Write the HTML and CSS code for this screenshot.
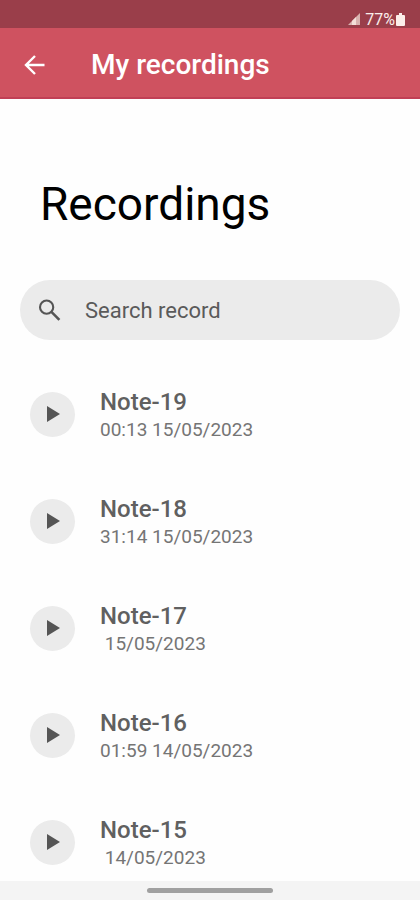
FILE: index.html
```html
<!DOCTYPE html>
<html lang="en">
<head>
    <meta charset="UTF-8">
    <meta name="viewport" content="width=device-width, initial-scale=1.0">
    <title>My recordings</title>
    <link rel="stylesheet" href="styles.css">
</head>
<body>
    <div class="status-bar">
        <svg class="signal" viewBox="0 0 12 12" aria-hidden="true">
            <path d="M0 12L12 0V12Z" fill="#d9b3b0"/>
            <path d="M4 12V8L8 4V12Z" fill="#f3dfd9"/>
        </svg>
        <span>77%</span>
        <svg class="battery" viewBox="0 0 9 13" aria-hidden="true">
            <path d="M3 0H6V2H8Q9 2 9 3V12Q9 13 8 13H1Q0 13 0 12V3Q0 2 1 2H3Z" fill="#fbeeea"/>
        </svg>
    </div>

    <header class="app-bar">
        <button type="button" class="back-btn" aria-label="Back">
            <svg viewBox="0 0 20 20" aria-hidden="true">
                <path d="M10.5 1L1.5 10L10.5 19M1.5 10H20" fill="none" stroke="#fff" stroke-width="2.4"/>
            </svg>
        </button>
        <h1>My recordings</h1>
    </header>

    <main>
        <h2>Recordings</h2>
        <label class="search">
            <svg viewBox="0 0 24 24" aria-hidden="true">
                <circle cx="9" cy="8.5" r="6.9" fill="none" stroke="#555" stroke-width="2.2"/>
                <path d="M14 13.5L22.3 21.8" stroke="#555" stroke-width="2.7"/>
            </svg>
            <input type="search" placeholder="Search record" aria-label="Search record">
        </label>
        <ul id="recordList" class="records"></ul>
    </main>

    <footer class="nav-bar"><span class="nav-handle"></span></footer>

    <script>
        const records = [
            { name: 'Note-19', length: '00:13', date: '15/05/2023' },
            { name: 'Note-18', length: '31:14', date: '15/05/2023' },
            { name: 'Note-17', length: '', date: '15/05/2023' },
            { name: 'Note-16', length: '01:59', date: '14/05/2023' },
            { name: 'Note-15', length: '', date: '14/05/2023' }
        ];
        const list = document.getElementById('recordList');

        records.forEach((record) => {
            const item = document.createElement('li');
            item.className = 'record';
            item.innerHTML = `
                <button type="button" class="play-btn" aria-label="Play ${record.name}">
                    <svg viewBox="0 0 13 16" aria-hidden="true"><path d="M0 0L13 8L0 16Z" fill="#555"/></svg>
                </button>
                <div class="record-text">
                    <h3>${record.name}</h3>
                    <p>${record.length} ${record.date}</p>
                </div>
            `;
            list.appendChild(item);
        });
    </script>
</body>
</html>
```

FILE: styles.css
```css
* {
    box-sizing: border-box;
}
body {
    margin: 0;
    height: 100vh;
    display: flex;
    flex-direction: column;
    font-family: Roboto, sans-serif;
    background-color: #fefefe;
}
h1, h2, h3, p, ul {
    margin: 0;
    padding: 0;
}
button {
    padding: 0;
    border: none;
    background: none;
    cursor: pointer;
}
svg {
    display: block;
}
.status-bar {
    flex: none;
    display: flex;
    align-items: center;
    justify-content: flex-end;
    height: 28px;
    padding: 10px 15px 0;
    font-size: 16px;
    color: #fbeeea;
    background-color: #9a3e4a;
}
.signal {
    width: 12px;
    height: 12px;
    margin-right: 5px;
}
.battery {
    width: 9px;
    height: 13px;
    margin-left: 1px;
}
.app-bar {
    flex: none;
    display: flex;
    align-items: center;
    gap: 46px;
    height: 71px;
    padding: 4px 24px 0;
    color: #fff;
    background-color: #cf5260;
    border-bottom: 2px solid #c13f55;
}
.back-btn svg {
    width: 21px;
    height: 20px;
}
.app-bar h1 {
    font-size: 28px;
    font-weight: 500;
}
main {
    flex: 1;
    min-height: 0;
    padding: 0 20px;
    overflow: hidden;
}
h2 {
    padding: 78px 20px 48px;
    font-size: 46px;
    line-height: 55px;
    font-weight: 400;
    color: #000;
}
.search {
    display: flex;
    align-items: center;
    gap: 24px;
    height: 60px;
    padding: 0 18px;
    border-radius: 30px;
    background-color: #ebebeb;
}
.search svg {
    flex: none;
    width: 23px;
    height: 23px;
}
.search input {
    flex: 1;
    min-width: 0;
    padding: 0;
    border: none;
    outline: none;
    background: none;
    font: 22px Roboto, sans-serif;
    color: #555;
}
.search input::placeholder {
    color: #5a5a5a;
}
.records {
    list-style: none;
    padding: 44px 10px 0;
}
.record {
    display: flex;
    align-items: center;
    gap: 25px;
    height: 60px;
    margin-bottom: 47px;
}
.play-btn {
    display: flex;
    align-items: center;
    justify-content: center;
    width: 45px;
    height: 45px;
    padding-left: 2px;
    border-radius: 50%;
    background-color: #ebebeb;
}
.play-btn svg {
    width: 13px;
    height: 16px;
}
.record-text {
    padding-top: 4px;
}
.record h3 {
    font-size: 24px;
    line-height: 28px;
    font-weight: 500;
    color: #606060;
}
.record p {
    font-size: 19px;
    line-height: 28px;
    color: #757575;
    white-space: pre;
}
.nav-bar {
    flex: none;
    display: flex;
    align-items: center;
    justify-content: center;
    height: 19px;
    background-color: #f4f4f4;
}
.nav-handle {
    width: 126px;
    height: 5px;
    border-radius: 3px;
    background-color: #a0a0a0;
}
```
